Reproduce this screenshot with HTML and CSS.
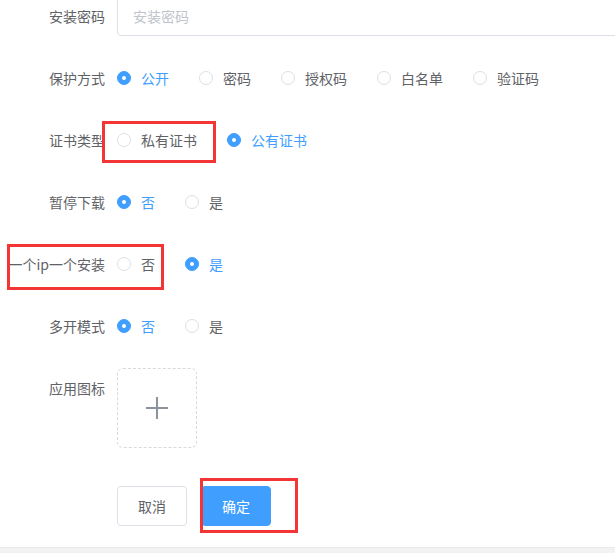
FILE: index.html
```html
<!DOCTYPE html>
<html lang="en">
<head>
    <meta charset="UTF-8">
    <meta name="viewport" content="width=device-width, initial-scale=1.0">
    <title>应用设置</title>
    <link rel="stylesheet" href="styles.css">
</head>
<body>
    <div class="page">
        <form class="app-form">
            <div class="form-item">
                <label class="form-label">安装密码</label>
                <div class="form-content">
                    <input class="text-input" type="text" placeholder="安装密码">
                </div>
            </div>

            <div class="form-item">
                <label class="form-label">保护方式</label>
                <div class="form-content">
                    <span class="radio is-checked"><span class="radio-inner"></span><span class="radio-label">公开</span></span>
                    <span class="radio"><span class="radio-inner"></span><span class="radio-label">密码</span></span>
                    <span class="radio"><span class="radio-inner"></span><span class="radio-label">授权码</span></span>
                    <span class="radio"><span class="radio-inner"></span><span class="radio-label">白名单</span></span>
                    <span class="radio"><span class="radio-inner"></span><span class="radio-label">验证码</span></span>
                </div>
            </div>

            <div class="form-item">
                <label class="form-label">证书类型</label>
                <div class="form-content">
                    <span class="radio"><span class="radio-inner"></span><span class="radio-label">私有证书</span></span>
                    <span class="radio is-checked"><span class="radio-inner"></span><span class="radio-label">公有证书</span></span>
                </div>
            </div>

            <div class="form-item">
                <label class="form-label">暂停下载</label>
                <div class="form-content">
                    <span class="radio is-checked"><span class="radio-inner"></span><span class="radio-label">否</span></span>
                    <span class="radio"><span class="radio-inner"></span><span class="radio-label">是</span></span>
                </div>
            </div>

            <div class="form-item">
                <label class="form-label">一个ip一个安装</label>
                <div class="form-content">
                    <span class="radio"><span class="radio-inner"></span><span class="radio-label">否</span></span>
                    <span class="radio is-checked"><span class="radio-inner"></span><span class="radio-label">是</span></span>
                </div>
            </div>

            <div class="form-item">
                <label class="form-label">多开模式</label>
                <div class="form-content">
                    <span class="radio is-checked"><span class="radio-inner"></span><span class="radio-label">否</span></span>
                    <span class="radio"><span class="radio-inner"></span><span class="radio-label">是</span></span>
                </div>
            </div>

            <div class="form-item upload-item">
                <label class="form-label">应用图标</label>
                <div class="form-content">
                    <div class="uploader">
                        <svg width="24" height="24" viewBox="0 0 24 24">
                            <path d="M12 1v22M1 12h22" stroke="#8c939d" stroke-width="2" fill="none"/>
                        </svg>
                    </div>
                </div>
            </div>

            <div class="form-item">
                <div class="form-label"></div>
                <div class="form-content buttons">
                    <button type="button" class="btn">取消</button>
                    <button type="button" class="btn btn-primary">确定</button>
                </div>
            </div>
        </form>

        <!-- red marks drawn over the screenshot -->
        <div class="mark mark-cert"></div>
        <div class="mark mark-ip"></div>
        <div class="mark mark-ok"></div>
    </div>
    <div class="footer-strip"></div>
</body>
</html>
```

FILE: styles.css
```css
html, body {
    margin: 0;
    padding: 0;
    background-color: #fff;
    overflow: hidden;
}

body {
    font-family: "Microsoft YaHei", "Noto Sans CJK SC", sans-serif;
    font-size: 14px;
    color: #606266;
}

.page {
    position: relative;
    height: 547px;
    overflow: hidden;
}

.app-form {
    margin-top: -4px;
}

.form-item {
    display: flex;
    margin-bottom: 22px;
}

.form-label {
    width: 117px;
    flex-shrink: 0;
    box-sizing: border-box;
    padding-right: 12px;
    text-align: right;
    line-height: 40px;
    white-space: nowrap;
    color: #606266;
}

.form-content {
    display: flex;
    align-items: center;
    min-height: 40px;
}

.text-input {
    width: 540px;
    height: 40px;
    box-sizing: border-box;
    border: 1px solid #dcdfe6;
    border-radius: 4px;
    padding: 0 15px;
    font-family: inherit;
    font-size: 14px;
    color: #606266;
    outline: none;
}

.text-input::placeholder {
    color: #c0c4cc;
}

.radio {
    display: inline-flex;
    align-items: center;
    margin-right: 30px;
    line-height: 1;
    cursor: pointer;
}

.radio-inner {
    width: 14px;
    height: 14px;
    box-sizing: border-box;
    border: 1px solid #dcdfe6;
    border-radius: 50%;
    background: #fff;
    display: inline-flex;
    align-items: center;
    justify-content: center;
}

.radio-label {
    padding-left: 10px;
}

.radio.is-checked .radio-inner {
    background: #409eff;
    border-color: #409eff;
}

.radio.is-checked .radio-inner::after {
    content: "";
    width: 4px;
    height: 4px;
    border-radius: 50%;
    background: #fff;
}

.radio.is-checked .radio-label {
    color: #409eff;
}

.upload-item {
    margin-bottom: 38px;
}

.uploader {
    width: 80px;
    height: 80px;
    box-sizing: border-box;
    border: 1px dashed #d9d9d9;
    border-radius: 6px;
    display: flex;
    align-items: center;
    justify-content: center;
}

.buttons {
    gap: 14px;
}

.btn {
    height: 40px;
    padding: 0 20px;
    box-sizing: border-box;
    border: 1px solid #dcdfe6;
    border-radius: 4px;
    background: #fff;
    color: #606266;
    font-family: inherit;
    font-size: 14px;
    cursor: pointer;
}

.btn-primary {
    background: #409eff;
    border-color: #409eff;
    color: #fff;
}

.mark {
    position: absolute;
    border: 3px solid #f43535;
    box-sizing: border-box;
}

.mark-cert {
    left: 102px;
    top: 121px;
    width: 114px;
    height: 42px;
}

.mark-ip {
    left: 7px;
    top: 244px;
    width: 157px;
    height: 46px;
}

.mark-ok {
    left: 200px;
    top: 478px;
    width: 98px;
    height: 55px;
}

.footer-strip {
    height: 6px;
    background: #f2f2f2;
    border-top: 1px solid #e9e9e9;
}
```
